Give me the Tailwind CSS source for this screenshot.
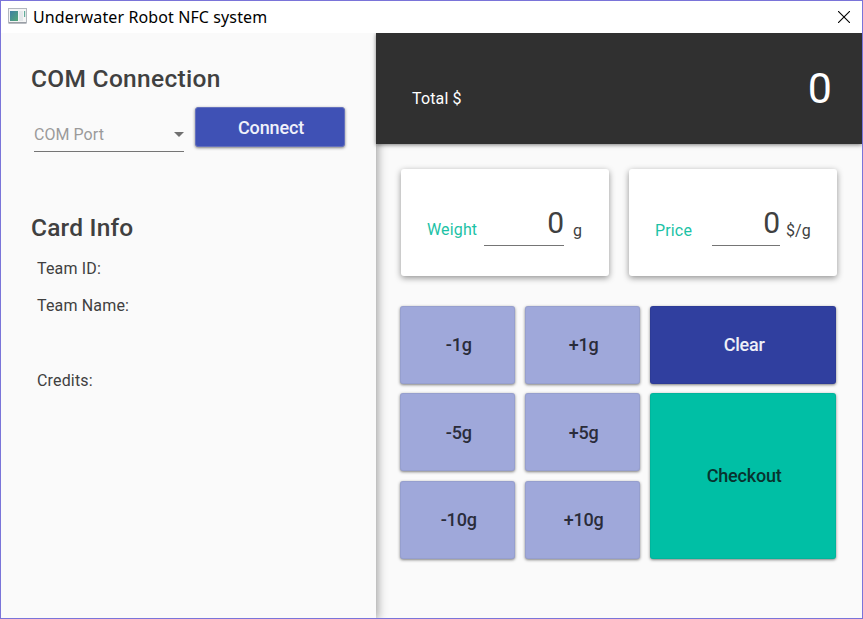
<!DOCTYPE html>
<html lang="en">
<head>
<meta charset="utf-8">
<title>Underwater Robot NFC system</title>
<script src="https://cdn.jsdelivr.net/npm/@tailwindcss/browser@4"></script>
</head>
<body class="w-[863px] h-[619px] overflow-hidden">
<div class="w-[863px] h-[619px] border border-[#7a74d9] bg-[#fafafa] flex flex-col overflow-hidden font-['Roboto',sans-serif] text-[#404040]">
  <header class="relative z-30 h-8 shrink-0 bg-white flex items-center pl-[7px] pr-3">
    <svg class="w-[19px] h-4 shrink-0 -mt-[2px]" viewBox="0 0 19 16">
      <defs><linearGradient id="g" x1="0" y1="0" x2="1" y2="1"><stop offset="0" stop-color="#3f7fa3"/><stop offset="1" stop-color="#55a877"/></linearGradient></defs>
      <rect x=".5" y=".5" width="18" height="14.500" fill="#f4f5f5" stroke="#b3b8bf"/>
      <rect x="1" y="14" width="17" height="1.500" fill="#9a9fa6"/>
      <rect x="2" y="3" width="8" height="10" fill="url(#g)"/>
      <rect x="11" y="3" width="4" height="10" fill="#e3e7ea"/>
      <rect x="16" y="3" width="1.200" height="6" fill="#63ad9b"/>
    </svg>
    <h1 class="ml-[6px] font-['Noto_Sans',sans-serif] text-[16px] leading-8 tracking-[0.11px] text-black whitespace-nowrap">Underwater Robot NFC system</h1>
    <svg class="ml-auto w-3 h-3" viewBox="0 0 12 12" stroke="#000" stroke-width="1.100" fill="none"><path d="M0 0L12 12M12 0L0 12"/></svg>
  </header>
  <div class="flex flex-1 min-h-0">
    <aside class="relative z-10 w-[375px] shrink-0 bg-[#fafafa] pl-[30px] pt-[30px] shadow-[1px_2px_10px_rgba(0,0,0,0.42)]">
      <h2 class="text-[24.500px] leading-8 font-medium tracking-[0.300px]">COM Connection</h2>
      <div class="flex mt-3">
        <div class="ml-[3px] w-[150px] h-[45px] border-b border-[#757575] flex items-center justify-between text-[#9a9a9a]">
          <span class="text-[16px] leading-6 mt-[11px] tracking-[0.050px]">COM Port</span>
          <svg class="w-[10px] h-[5px] mt-[11px]" viewBox="0 0 10 5"><path d="M0 0H10L5 5Z" fill="#707070"/></svg>
        </div>
        <button class="ml-[11px] w-[150px] h-10 rounded-[3px] bg-[#3f51b5] text-[#f0f1fa] text-[18px] font-medium tracking-[-0.150px] pl-[2px] border border-[#6571bd] shadow-[0_1px_3px_rgba(0,0,0,0.5)]">Connect</button>
      </div>
      <h2 class="mt-[60px] text-[24.500px] leading-8 font-medium tracking-[0.200px]">Card Info</h2>
      <div class="pl-[6px] mt-[13px] text-[16px] leading-6 tracking-[0.160px]">
        <p>Team ID:</p>
        <p class="mt-[13px]">Team Name:</p>
        <p class="mt-[51px]">Credits:</p>
      </div>
    </aside>
    <main class="flex-1 min-w-0 flex flex-col">
      <div class="relative z-20 h-[111px] shrink-0 bg-[#303030] text-white flex items-start justify-between pl-9 pr-[30px] pt-[28px] shadow-[0_1px_4px_rgba(0,0,0,0.5)]">
        <span class="text-[16px] leading-6 mt-[26px] tracking-[0.150px]">Total $</span>
        <span class="text-[43px] leading-[54px]">0</span>
      </div>
      <div class="flex gap-5 pl-[25px] pt-[25px]">
        <section class="w-[208px] h-[107px] rounded-[3px] bg-white shadow-[0_2px_6px_rgba(0,0,0,0.42)] pl-[26px] pt-[33px] flex items-start">
          <span class="w-[57px] text-[16px] leading-6 pt-[16px] text-[#1cc2a6] tracking-[0.150px]">Weight</span>
          <span class="w-[80px] h-[44px] border-b border-[#757575] text-right text-[30px] leading-[42px]">0</span>
          <span class="ml-[9px] text-[16px] leading-6 pt-[17px]">g</span>
        </section>
        <section class="w-[208px] h-[107px] rounded-[3px] bg-white shadow-[0_2px_6px_rgba(0,0,0,0.42)] pl-[26px] pt-[33px] flex items-start">
          <span class="w-[57px] text-[16px] leading-6 pt-[17px] text-[#1cc2a6] tracking-[0.150px]">Price</span>
          <span class="w-[68px] h-[44px] border-b border-[#757575] text-right text-[30px] leading-[42px]">0</span>
          <span class="ml-[6px] text-[16px] leading-6 pt-[17px] tracking-[0.100px]">$/g</span>
        </section>
      </div>
      <div class="mt-[30px] ml-6 grid grid-cols-[115.400px_115.400px_186.400px] grid-rows-[78px_78px_78px] gap-x-[9.600px] gap-y-[9.400px] text-[18px] font-medium tracking-[-0.200px] text-[#2a2c3a] [&>button]:pl-[2px] [&>button]:rounded-[3px] [&>button]:border [&>button]:border-black/5 [&>button]:shadow-[0_1px_3px_rgba(0,0,0,0.5)]">
        <button class="bg-[#9fa8da] pb-[1px]">-1g</button>
        <button class="bg-[#9fa8da] pb-[1px]">+1g</button>
        <button class="bg-[#303f9f] text-[#eeeff7] pb-[1px]">Clear</button>
        <button class="bg-[#9fa8da]">-5g</button>
        <button class="bg-[#9fa8da]">+5g</button>
        <button class="row-span-2 bg-[#00bfa5] text-[#08332f] pb-[1px]">Checkout</button>
        <button class="bg-[#9fa8da] pb-[1px]">-10g</button>
        <button class="bg-[#9fa8da] pb-[1px]">+10g</button>
      </div>
    </main>
  </div>
</div>
</body>
</html>
